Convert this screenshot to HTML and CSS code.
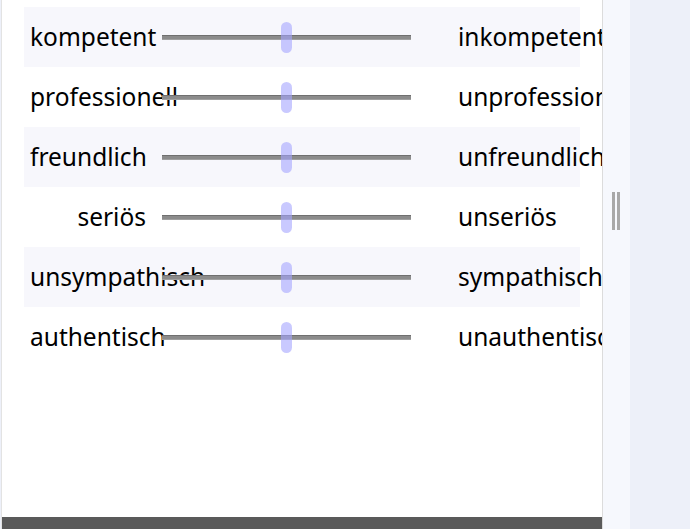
FILE: index.html
```html
<!DOCTYPE html>
<html lang="de">
<head>
<meta charset="utf-8">
<link rel="stylesheet" href="styles.css">
</head>
<body>
<div class="app">
  <main class="panel">
    <div class="rows">
      <div class="row shaded">
        <span class="left">kompetent</span>
        <input class="slider" type="range" min="0" max="100" value="50">
        <span class="right">inkompetent</span>
      </div>
      <div class="row">
        <span class="left">professionell</span>
        <input class="slider" type="range" min="0" max="100" value="50">
        <span class="right">unprofessionell</span>
      </div>
      <div class="row shaded">
        <span class="left">freundlich</span>
        <input class="slider" type="range" min="0" max="100" value="50">
        <span class="right">unfreundlich</span>
      </div>
      <div class="row">
        <span class="left">seriös</span>
        <input class="slider" type="range" min="0" max="100" value="50">
        <span class="right">unseriös</span>
      </div>
      <div class="row shaded">
        <span class="left">unsympathisch</span>
        <input class="slider" type="range" min="0" max="100" value="50">
        <span class="right">sympathisch</span>
      </div>
      <div class="row">
        <span class="left">authentisch</span>
        <input class="slider" type="range" min="0" max="100" value="50">
        <span class="right">unauthentisch</span>
      </div>
    </div>
    <div class="footer"></div>
  </main>
  <div class="handle-strip"><div class="handle"></div></div>
  <div class="side"></div>
</div>
</body>
</html>
```
FILE: styles.css
```css
html, body {
  margin: 0;
  padding: 0;
  height: 100%;
}
body {
  font-family: "Noto Sans", "Open Sans", sans-serif;
  color: #000;
  background: #edf0f9;
}
.app {
  display: flex;
  height: 529px;
  width: 690px;
}
.panel {
  width: 600px;
  border-left: 1px solid #e3e3e3;
  margin-left: 1px;
  border-right: 1px solid #dcdcdc;
  background: #fff;
  display: flex;
  flex-direction: column;
  overflow: hidden;
}
.rows {
  flex: 1;
  padding: 7px 0 0 22px;
}
.row {
  width: 556px;
  height: 60px;
  display: flex;
  align-items: center;
  white-space: nowrap;
}
.row.shaded {
  background: #f7f7fc;
}
.left {
  width: 116px;
  margin-left: 6px;
  margin-top: -2px;
  text-align: right;
  font-size: 24.5px;
  flex: none;
  overflow: visible;
}
.slider {
  -webkit-appearance: none;
  appearance: none;
  margin: 1px 0 0 16px;
  width: 249px;
  height: 31px;
  background: transparent;
  flex: none;
}
.slider::-webkit-slider-runnable-track {
  height: 5px;
  background: #8b8b8b;
  border-top: 1px solid #6f6f6f;
  border-bottom: 1px solid #a0a0a0;
  box-sizing: border-box;
}
.slider::-webkit-slider-thumb {
  -webkit-appearance: none;
  width: 11px;
  height: 31px;
  margin-top: -14px;
  border-radius: 6px;
  background: rgba(165, 165, 255, 0.6);
}
.right {
  margin-left: 47px;
  margin-top: -2px;
  font-size: 24.5px;
  flex: none;
}
.footer {
  height: 12px;
  background: #5a5a5a;
  flex: none;
}
.handle-strip {
  width: 27px;
  background: #f6f8fd;
  flex: none;
}
.handle {
  margin: 192px 0 0 9px;
  width: 2px;
  height: 38px;
  border-left: 3px solid #a8a8a8;
  border-right: 3px solid #a8a8a8;
  box-sizing: content-box;
}
.side {
  flex: 1;
  background: #edf0f9;
}
```
